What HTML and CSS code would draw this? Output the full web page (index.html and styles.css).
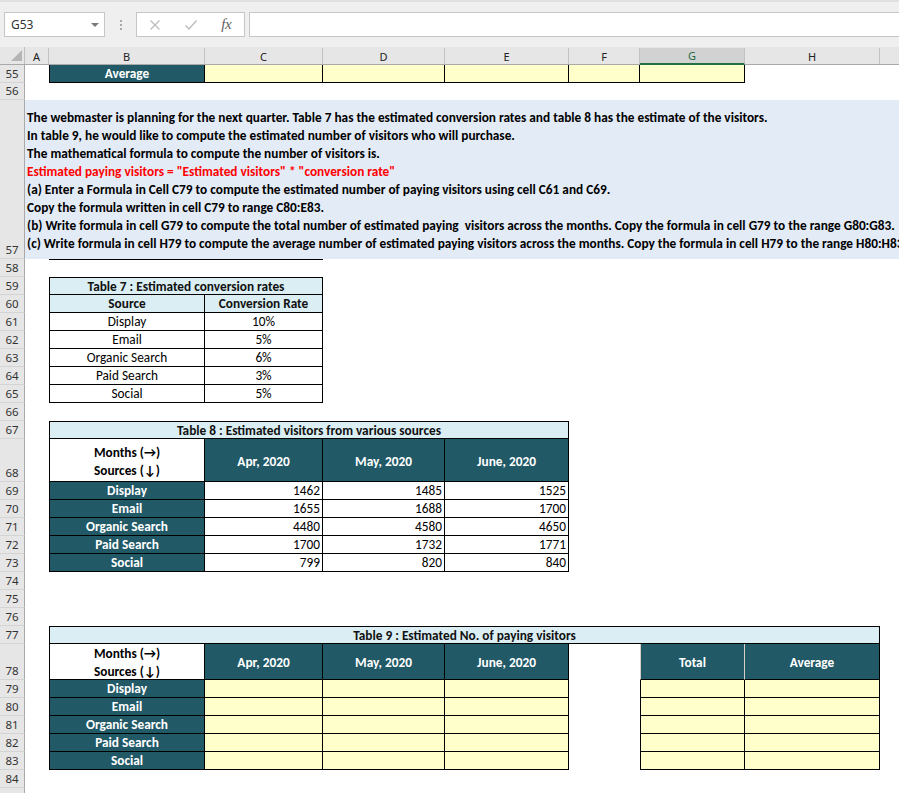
FILE: index.html
```html
<!DOCTYPE html>
<html>
<head>
<meta charset="utf-8">
<title>Sheet</title>
<link rel="stylesheet" href="styles.css">
</head>
<body>
<div class="app">
  <div class="toolbar">
    <div class="namebox"><span class="nb-text">G53</span><span class="nb-arrow"></span></div>
    <div class="grip"><i></i><i></i><i></i></div>
    <div class="fbtns">
      <span class="slot"><svg width="12" height="12" viewBox="0 0 12 12"><path d="M1.5 1.5L10.5 10.5M10.5 1.5L1.5 10.5" stroke="#bcbcbc" stroke-width="1.3" fill="none"/></svg></span>
      <span class="slot"><svg width="14" height="12" viewBox="0 0 14 12"><path d="M1.5 6.5L5 10L12.5 1.5" stroke="#bcbcbc" stroke-width="1.4" fill="none"/></svg></span>
      <span class="slot fx">fx</span>
    </div>
    <div class="finput"></div>
  </div>

  <div class="colhdr">
    <div class="corner"><span class="tri"></span></div>
    <div class="ch">A</div>
    <div class="ch">B</div>
    <div class="ch">C</div>
    <div class="ch">D</div>
    <div class="ch">E</div>
    <div class="ch">F</div>
    <div class="ch sel">G</div>
    <div class="ch">H</div>
    <div class="ch last"></div>
  </div>

  <div class="sheet">
    <div class="row"><div class="rh">55</div><div></div><div class="c teal bx bl">Average</div><div class="c yel bx"></div><div class="c yel bx"></div><div class="c yel bx"></div><div class="c yel bx"></div><div class="c yel bx"></div></div>
    <div class="row h17"><div class="rh">56</div></div>
    <div class="row h159"><div class="rh">57</div>
      <div class="note">
        <div>The webmaster is planning for the next quarter. Table 7 has the estimated conversion rates and table 8 has the estimate of the visitors.</div>
        <div>In table 9, he would like to compute the estimated number of visitors who will purchase.</div>
        <div>The mathematical formula to compute the number of visitors is.</div>
        <div class="red">Estimated paying visitors = "Estimated visitors" * "conversion rate"</div>
        <div>(a) Enter a Formula in Cell C79 to compute the estimated number of paying visitors using cell C61 and C69.</div>
        <div>Copy the formula written in cell C79 to range C80:E83.</div>
        <div>(b) Write formula in cell G79 to compute the total number of estimated paying&nbsp; visitors across the months. Copy the formula in cell G79 to the range G80:G83.</div>
        <div>(c) Write formula in cell H79 to compute the average number of estimated paying visitors across the months. Copy the formula in cell H79 to the range H80:H83.</div>
      </div>
    </div>
    <div class="row"><div class="rh">58</div><div></div><div class="s2 bt"></div></div>
    <div class="row"><div class="rh">59</div><div></div><div class="c s2 lb bx bl bt">Table 7 : Estimated conversion rates</div></div>
    <div class="row"><div class="rh">60</div><div></div><div class="c lb bx bl">Source</div><div class="c lb bx">Conversion Rate</div></div>
    <div class="row"><div class="rh">61</div><div></div><div class="c bx bl">Display</div><div class="c bx">10%</div></div>
    <div class="row"><div class="rh">62</div><div></div><div class="c bx bl">Email</div><div class="c bx">5%</div></div>
    <div class="row"><div class="rh">63</div><div></div><div class="c bx bl">Organic Search</div><div class="c bx">6%</div></div>
    <div class="row"><div class="rh">64</div><div></div><div class="c bx bl">Paid Search</div><div class="c bx">3%</div></div>
    <div class="row"><div class="rh">65</div><div></div><div class="c bx bl">Social</div><div class="c bx">5%</div></div>
    <div class="row"><div class="rh">66</div></div>
    <div class="row"><div class="rh">67</div><div></div><div class="c s4 lb bx bl bt">Table 8 : Estimated visitors from various sources</div></div>
    <div class="row h43"><div class="rh">68</div><div></div>
      <div class="c two b bx bl"><span>Months (→)</span><span>Sources (↓)</span></div>
      <div class="c teal bx">Apr, 2020</div><div class="c teal bx">May, 2020</div><div class="c teal bx">June, 2020</div>
    </div>
    <div class="row"><div class="rh">69</div><div></div><div class="c teal bx bl">Display</div><div class="c num bx">1462</div><div class="c num bx">1485</div><div class="c num bx">1525</div></div>
    <div class="row"><div class="rh">70</div><div></div><div class="c teal bx bl">Email</div><div class="c num bx">1655</div><div class="c num bx">1688</div><div class="c num bx">1700</div></div>
    <div class="row"><div class="rh">71</div><div></div><div class="c teal bx bl">Organic Search</div><div class="c num bx">4480</div><div class="c num bx">4580</div><div class="c num bx">4650</div></div>
    <div class="row"><div class="rh">72</div><div></div><div class="c teal bx bl">Paid Search</div><div class="c num bx">1700</div><div class="c num bx">1732</div><div class="c num bx">1771</div></div>
    <div class="row"><div class="rh">73</div><div></div><div class="c teal bx bl">Social</div><div class="c num bx">799</div><div class="c num bx">820</div><div class="c num bx">840</div></div>
    <div class="row"><div class="rh">74</div></div>
    <div class="row"><div class="rh">75</div></div>
    <div class="row"><div class="rh">76</div></div>
    <div class="row"><div class="rh">77</div><div></div><div class="c s7 lb bx bl bt">Table 9 : Estimated No. of paying visitors</div></div>
    <div class="row h36"><div class="rh">78</div><div></div>
      <div class="c two b bx bl"><span>Months (→)</span><span>Sources (↓)</span></div>
      <div class="c teal bx">Apr, 2020</div><div class="c teal bx">May, 2020</div><div class="c teal bx">June, 2020</div>
      <div></div>
      <div class="c teal gl gr bb">Total</div><div class="c teal bx">Average</div>
    </div>
    <div class="row"><div class="rh">79</div><div></div><div class="c teal bx bl">Display</div><div class="c yel bx"></div><div class="c yel bx"></div><div class="c yel bx"></div><div></div><div class="c yel bx bl"></div><div class="c yel bx"></div></div>
    <div class="row"><div class="rh">80</div><div></div><div class="c teal bx bl">Email</div><div class="c yel bx"></div><div class="c yel bx"></div><div class="c yel bx"></div><div></div><div class="c yel bx bl"></div><div class="c yel bx"></div></div>
    <div class="row"><div class="rh">81</div><div></div><div class="c teal bx bl">Organic Search</div><div class="c yel bx"></div><div class="c yel bx"></div><div class="c yel bx"></div><div></div><div class="c yel bx bl"></div><div class="c yel bx"></div></div>
    <div class="row"><div class="rh">82</div><div></div><div class="c teal bx bl">Paid Search</div><div class="c yel bx"></div><div class="c yel bx"></div><div class="c yel bx"></div><div></div><div class="c yel bx bl"></div><div class="c yel bx"></div></div>
    <div class="row"><div class="rh">83</div><div></div><div class="c teal bx bl">Social</div><div class="c yel bx"></div><div class="c yel bx"></div><div class="c yel bx"></div><div></div><div class="c yel bx bl"></div><div class="c yel bx"></div></div>
    <div class="row"><div class="rh">84</div></div>
    <div class="row"><div class="rh"></div></div>
  </div>
</div>
</body>
</html>
```

FILE: styles.css
```css
* { box-sizing: border-box; margin: 0; padding: 0; }
html, body { margin: 0; padding: 0; background: #fff; }
body {
  width: 899px;
  height: 793px;
  overflow: hidden;
  font-family: "Carlito", "Lato", sans-serif;
  font-size: 13.3px;
  color: #000;
}
.app { width: 899px; height: 793px; overflow: hidden; }

/* formula bar */
.toolbar {
  height: 47px;
  background: #efefef;
  border-top: 2px solid #e0e0e0;
  display: flex;
  align-items: flex-start;
  padding: 10px 0 0 4px;
}
.namebox {
  width: 101px;
  height: 25px;
  background: #fff;
  border: 1px solid #c6c6c6;
  display: flex;
  align-items: center;
  justify-content: space-between;
  padding: 0 5px 0 6px;
}
.nb-text { font-family: "Noto Sans", sans-serif; font-size: 12px; color: #333; }
.nb-arrow {
  width: 0; height: 0;
  border-left: 4px solid transparent;
  border-right: 4px solid transparent;
  border-top: 4px solid #7a7a7a;
}
.grip {
  width: 31px;
  height: 25px;
  display: flex;
  flex-direction: column;
  align-items: center;
  justify-content: center;
  gap: 2px;
}
.grip i { display: block; width: 2px; height: 2px; background: #a8a8a8; }
.fbtns {
  width: 109px;
  height: 25px;
  background: #fff;
  border: 1px solid #c6c6c6;
  display: flex;
  align-items: center;
}
.slot { width: 36px; height: 23px; display: flex; align-items: center; justify-content: center; }
.slot svg { display: block; }
.fx {
  font-family: "Liberation Serif", serif;
  font-style: italic;
  font-size: 15px;
  color: #5e5e5e;
  letter-spacing: -0.5px;
}
.finput {
  flex: 1;
  height: 25px;
  margin-left: 4px;
  background: #fff;
  border: 1px solid #c6c6c6;
  border-right: none;
}

/* column headers */
.colhdr {
  display: grid;
  grid-template-columns: 25px 24px 156px 118px 122px 124px 71px 105px 135px 19px;
  height: 18px;
  background: #e6e6e6;
  border-bottom: 1px solid #a9a9a9;
}
.corner {
  border-right: 1px solid #c0c0c0;
  display: flex;
  align-items: flex-end;
  justify-content: flex-end;
  padding: 0 2px 3px 0;
}
.tri {
  width: 0; height: 0;
  border-left: 11px solid transparent;
  border-bottom: 11px solid #b5b5b5;
}
.ch {
  display: flex;
  align-items: center;
  justify-content: center;
  font-family: "Noto Sans", sans-serif;
  font-size: 11px;
  color: #222;
  border-right: 1px solid #c2c2c2;
  margin-top: 1px;
}
.ch.last { border-right: none; }
.ch.sel {
  background: #d2d2d2;
  color: #1e6b45;
  border-bottom: 2px solid #217346;
  margin-bottom: -1px;
}

/* sheet rows */
.row {
  display: grid;
  grid-template-columns: 25px 24px 156px 118px 122px 124px 71px 105px 135px 19px;
  height: 18px;
}
.h17 { height: 17px; }
.h159 { height: 159px; }
.h43 { height: 43px; }
.h36 { height: 36px; }

.rh {
  background: #e6e6e6;
  border-right: 1px solid #a9a9a9;
  border-bottom: 1px solid #d4d4d4;
  font-family: "Noto Sans", sans-serif;
  font-size: 11.5px;
  line-height: 16px;
  color: #333;
  display: flex;
  align-items: flex-end;
  justify-content: center;
}

.c {
  display: flex;
  align-items: center;
  justify-content: center;
  white-space: nowrap;
  overflow: hidden;
  line-height: 16px;
  padding-top: 1px;
}
.h43 .c, .h36 .c { padding-top: 3px; }
.b { font-weight: bold; }
.teal { background: #215967; color: #fff; font-weight: bold; }
.yel { background: #ffffcc; }
.lb { background: #daeef3; font-weight: bold; color: #111; }
.bx { border-right: 1px solid #000; border-bottom: 1px solid #000; }
.bl { border-left: 1px solid #000; }
.bt { border-top: 1px solid #000; }
.bb { border-bottom: 1px solid #000; }
.gl { border-left: 1px solid #d6d1c6; }
.gr { border-right: 1px solid #d6d1c6; }
.num { justify-content: flex-end; padding-right: 2px; }
.s2 { grid-column: span 2; }
.s4 { grid-column: span 4; }
.s7 { grid-column: span 7; }
.two { flex-direction: column; line-height: 18px; }

.note {
  grid-column: 2 / -1;
  background: #e3ebf6;
  display: flex;
  flex-direction: column;
  justify-content: flex-end;
  padding: 0 0 6px 2px;
  font-weight: bold;
  line-height: 18px;
  white-space: nowrap;
}
.red { color: #ff0000; }
```
